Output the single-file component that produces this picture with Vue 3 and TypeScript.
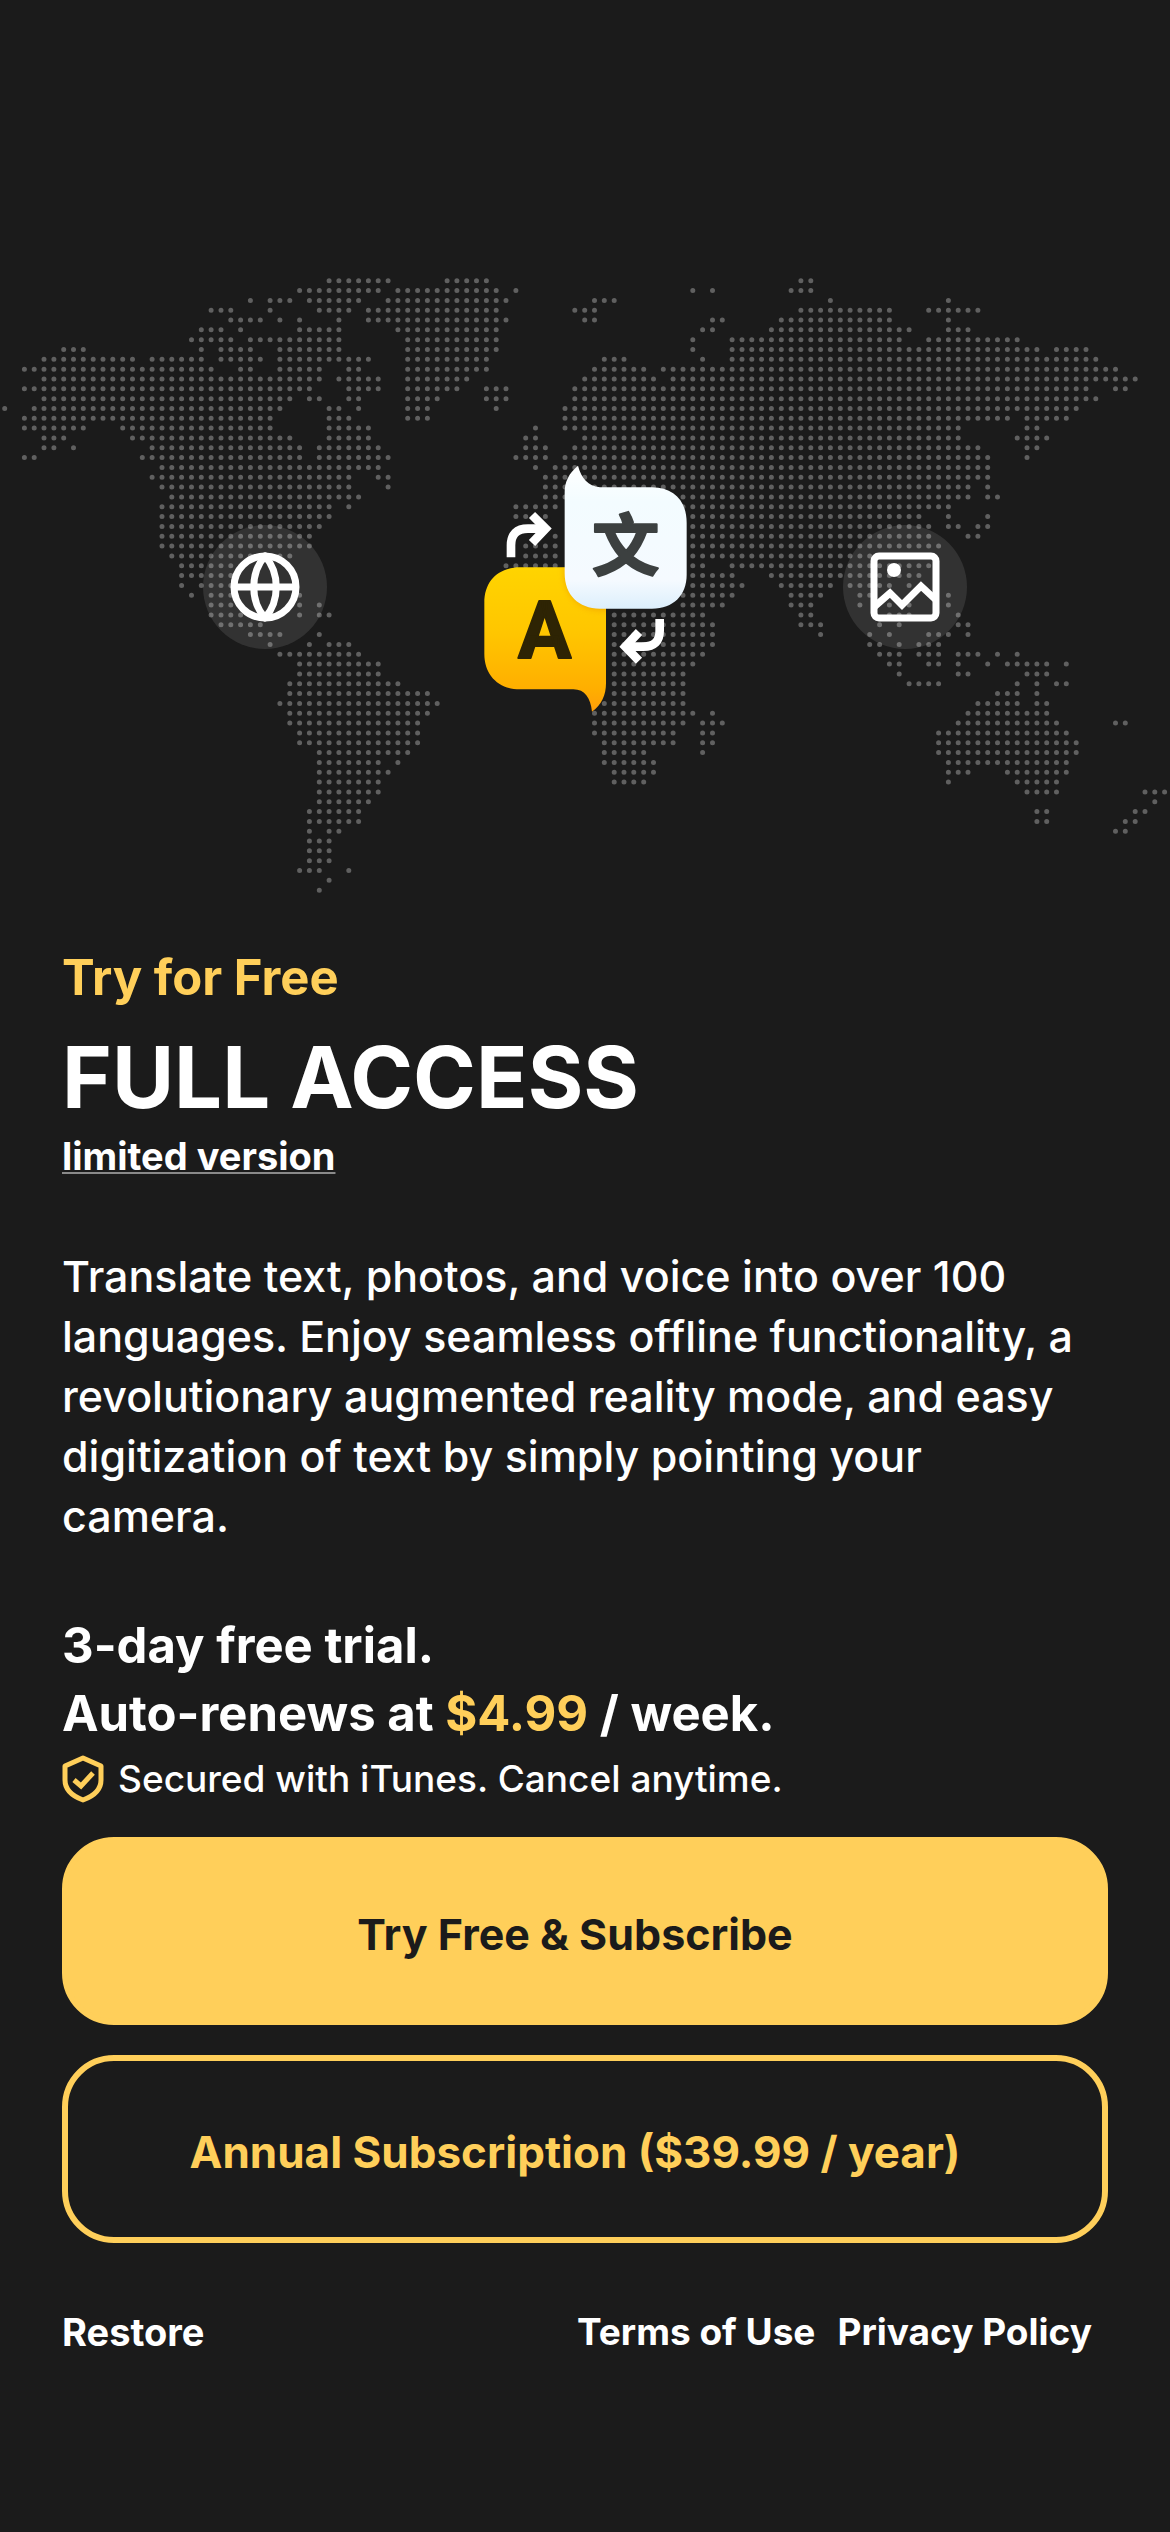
<script setup lang="ts">
// Land cells of the dotted world map: one entry per grid row, each a list of column spans.
const landRows: string[] = [
  '33-39 45-49 81-82',
  '30-38 40-50 52 70 72 80-82',
  '25 27-29 31-36 39-51 60-62 84 96',
  '21-23 27 32-35 37-50 58-60 81-90 94-99',
  '23-26 28 30 34 37-51 59-60 72-73 79-90 96',
  '20-22 24 30-34 40-50 71-72 78-92 96-98',
  '19-23 25-34 41-50 70 74-91 94-103',
  '6-8 20 22-25 28-34 41-50 70 74-105 107-110',
  '4-13 15-20 22-26 28-37 41-49 61-63 71 74-111',
  '2-21 24-25 28-32 35-36 41-49 60-65 67-113',
  '4-32 34-38 41-47 59-66 68-115',
  '2-31 35-38 41-46 49-51 58-110 113-114',
  '4-29 31-32 35-36 41-44 49-51 58-111',
  '0 3-28 33-34 36 41-43 50 57-109',
  '2-27 33-35 41-43 57-102 104-108',
  '2-8 12-27 33-37 54 57-97 104-105',
  '4-6 13-29 33-37 53-54 59-97 103-106',
  '4-5 7 15-30 32-38 53-55 58-99 104-105',
  '2-3 14-30 32-39 52-55 57-100 104',
  '16-38 54 56-100',
  '15-35 38-39 55-100',
  '16-35 39 55-98 100',
  '17-36 55-98 100-101',
  '16-33 35 52-56 60-96',
  '16-33 52-55 60-93 96 100',
  '16-32 60-94 96-97 99-100',
  '16-31 56 60-94 98-99',
  '16-31 53-56 60-95',
  '17-29 53-56 60-94',
  '18-24 51-56 60-71 74-94',
  '18-23 70-74 78-93',
  '18 20-23 70-75 79-84 86-90 92',
  '19 21-23 30 69-74 80-83 87-88 96',
  '21-23 30 32 69-73 80-82 87 90 92 96',
  '21-24 30 32-33 62-71 81-82 90-92 97',
  '22-26 62-72 81-83 89 91 97-98',
  '25-28 32 62-72 83 88 90 94-96 98',
  '27 31 33-35 62-72 88-89 91 93-95',
  '28-36 62-71 89-91 93-95 97-99 101 103',
  '30-38 62-70 90-91 94-95 97 100 102-106 108',
  '30-38 62-69 91 97-98 104-106',
  '29-40 62-69 92-95 103 105 107-108',
  '29-43 62-69 101-103 105',
  '28-44 61-69 99-103 105-106',
  '29-43 60-70 72 98-106',
  '29-42 60-69 71-73 97-107 113-114',
  '30-42 60-68 71-72 95-108',
  '30-42 61-68 71-72 95-109',
  '32-41 61-65 71 95-109',
  '32-38 40 61-66 96-108',
  '32-39 62-66 96-98 102-108',
  '32-38 62-65 96 103-107',
  '32-38 104-107 116-118',
  '32-37 117',
  '31-36 105-106 115-116',
  '31-36 105-106 114-115',
  '31 33-34 113-114',
  '31-33',
  '31-33',
  '31-33',
  '30-32 35',
  '33',
  '32',
]

const pitch = 9.83
const originX = 4.7
const originY = 10.7

// Zero-length segments with round caps give one dot per cell.
const mapPath: string = landRows
  .map((row, r) => {
    const y = (originY + r * pitch).toFixed(1)
    return row
      .split(' ')
      .map((span) => {
        const [from, to = from] = span.split('-').map(Number)
        let d = ''
        for (let c = from; c <= to; c++) d += `M${(originX + c * pitch).toFixed(1)} ${y}h0`
        return d
      })
      .join('')
  })
  .join('')
</script>

<template>
  <main class="paywall">
    <section class="hero" aria-hidden="true">
      <svg class="map" viewBox="0 0 1170 630">
        <path :d="mapPath" fill="none" stroke="#606060" stroke-width="5" stroke-linecap="round" />
      </svg>
      <div class="features">
        <span class="badge">
          <svg viewBox="0 0 70 70" fill="none" stroke="#fff" stroke-width="7">
            <circle cx="35" cy="35" r="31" />
            <path d="M4 35H66" />
            <path d="M35 4C20 21 20 49 35 66C50 49 50 21 35 4Z" stroke-linejoin="round" />
          </svg>
        </span>
        <svg class="logo" viewBox="0 0 750 810">
          <defs>
            <linearGradient id="gold" x1="0" y1="0" x2="0" y2="1">
              <stop offset="0" stop-color="#ffd400" />
              <stop offset="0.45" stop-color="#ffc600" />
              <stop offset="0.85" stop-color="#ffae00" />
              <stop offset="1" stop-color="#ff9d0a" />
            </linearGradient>
            <linearGradient id="ice" x1="0" y1="0" x2="0" y2="1">
              <stop offset="0" stop-color="#ffffff" />
              <stop offset="0.25" stop-color="#f3fcff" />
              <stop offset="0.8" stop-color="#f5faff" />
              <stop offset="1" stop-color="#dceffc" />
            </linearGradient>
            <filter id="soft" x="-20%" y="-20%" width="140%" height="140%">
              <feGaussianBlur stdDeviation="9" />
            </filter>
            <clipPath id="goldClip">
              <path d="M180 352H438V700C438 735 425 765 396 785C392 745 375 718 340 718H180C115 718 73 675 73 612V458C73 392 115 352 180 352Z" />
            </clipPath>
          </defs>
          <path
            d="M180 352H438V700C438 735 425 765 396 785C392 745 375 718 340 718H180C115 718 73 675 73 612V458C73 392 115 352 180 352Z"
            fill="url(#gold)"
          />
          <g clip-path="url(#goldClip)">
            <rect x="314" y="112" width="366" height="368" rx="106" fill="#e88a00" opacity="0.55" filter="url(#soft)" />
          </g>
          <path
            d="M354 47C326 70 314 96 314 128V370C314 435 355 476 420 476H576C640 476 680 435 680 374V218C680 152 640 112 576 112H420C384 108 364 85 354 47Z"
            fill="url(#ice)"
          />
          <text class="latin" x="254" y="624" text-anchor="middle">A</text>
          <text class="han" x="497" y="359" text-anchor="middle">文</text>
          <g fill="none" stroke="#fff" stroke-width="26">
            <path d="M153 322V286Q153 236 204 236H250" />
            <path d="M216 195L257 236L216 279" />
            <path d="M599 507V542Q599 590 550 590H505" />
            <path d="M537 546L496 590L537 632" />
          </g>
        </svg>
        <span class="badge">
          <svg viewBox="0 0 70 70" fill="none" stroke="#fff" stroke-width="7">
            <rect x="4" y="4" width="62" height="62" rx="5" />
            <path d="M4 55L20 41L32 53L51 34L66 48" />
            <circle cx="24" cy="18" r="7" fill="#fff" stroke="none" />
          </svg>
        </span>
      </div>
    </section>

    <section class="offer">
      <p class="eyebrow">Try for Free</p>
      <h1>FULL ACCESS</h1>
      <a class="limited" href="#limited">limited version</a>
      <p class="pitch">
        Translate text, photos, and voice into over 100 languages. Enjoy seamless offline
        functionality, a revolutionary augmented reality mode, and easy digitization of text by
        simply pointing your camera.
      </p>
      <p class="terms">3-day free trial.<br />Auto-renews at <em>$4.99</em> / week.</p>
      <p class="secured">
        <svg viewBox="0 0 42 48" fill="none" stroke="#ffcf5a" aria-hidden="true">
          <path d="M21 3L39 11V25C39 34 32 41 21 45C10 41 3 34 3 25V11Z" stroke-width="5" stroke-linejoin="round" />
          <path d="M12 25L19 31L31 18" stroke-width="5" />
        </svg>
        Secured with iTunes. Cancel anytime.
      </p>
      <div class="actions">
        <button type="button" class="primary">Try Free &amp; Subscribe</button>
        <button type="button" class="outline">Annual Subscription ($39.99 / year)</button>
      </div>
    </section>

    <footer class="links">
      <a class="restore" href="#restore">Restore</a>
      <nav>
        <a href="#terms">Terms of Use</a>
        <a href="#privacy">Privacy Policy</a>
      </nav>
    </footer>
  </main>
</template>

<style>
body {
  background: #1b1b1b;
}
</style>

<style scoped>
.paywall {
  box-sizing: border-box;
  min-height: 100vh;
  padding-top: 270px;
  background: #1b1b1b;
  color: #fff;
  font-family: Inter, "Liberation Sans", sans-serif;
}

.hero {
  display: grid;
  align-items: center;
}

.map,
.features {
  grid-area: 1 / 1;
}

.map {
  display: block;
  width: 100%;
}

.features {
  display: flex;
  justify-content: center;
  align-items: center;
  gap: 133px;
}

.badge {
  display: grid;
  place-items: center;
  width: 124px;
  height: 124px;
  margin-top: 4px;
  border-radius: 50%;
  background: rgba(255, 255, 255, 0.1);
}

.badge svg {
  width: 70px;
  height: 70px;
}

.logo {
  width: 250px;
  height: 270px;
}

.latin {
  font: 700 238px Roboto, sans-serif;
  fill: #2e2404;
  stroke: #2e2404;
  stroke-width: 6px;
  stroke-linejoin: round;
}

.han {
  font: 700 202px "Noto Sans CJK SC", sans-serif;
  fill: #3c4040;
  stroke: #3c4040;
  stroke-width: 6px;
  stroke-linejoin: round;
}

.offer {
  display: flex;
  flex-direction: column;
  align-items: flex-start;
  padding: 48px 62px 0;
}

.offer p,
.offer h1 {
  margin: 0;
}

.offer .eyebrow {
  color: #ffcf5a;
  font-size: 49px;
  line-height: 60px;
  font-weight: 700;
}

.offer h1 {
  margin-top: 20px;
  font-size: 85px;
  line-height: 100px;
  font-weight: 700;
}

.limited {
  margin-top: 4px;
  color: #fff;
  font-size: 38px;
  line-height: 48px;
  font-weight: 700;
  text-decoration: underline #8a8a8a 2px;
  text-underline-offset: 2px;
  text-decoration-skip-ink: none;
}

.offer .pitch {
  margin-top: 66px;
  padding-right: 24px;
  font-size: 43px;
  line-height: 60px;
  font-weight: 500;
}

.offer .terms {
  margin-top: 66px;
  font-size: 49px;
  line-height: 68px;
  font-weight: 700;
}

.terms em {
  color: #ffcf5a;
  font-style: normal;
}

.offer .secured {
  display: flex;
  align-items: center;
  gap: 14px;
  margin-top: 7px;
  font-size: 37px;
  line-height: 48px;
  font-weight: 500;
}

.secured svg {
  width: 42px;
  height: 48px;
}

.actions {
  display: flex;
  flex-direction: column;
  gap: 30px;
  width: 100%;
  margin-top: 34px;
}

.actions button {
  box-sizing: border-box;
  width: 100%;
  height: 188px;
  padding: 6px 20px 0 0;
  border: 6px solid #ffcf5a;
  border-radius: 52px;
  font: inherit;
  font-size: 43px;
  font-weight: 700;
}

.actions .primary {
  background: #ffcf5a;
  color: #1b1b1b;
}

.actions .outline {
  background: transparent;
  color: #ffcf5a;
  font-size: 44px;
}

.links {
  display: flex;
  justify-content: space-between;
  padding: 65px 78px 0 62px;
  font-size: 37px;
  line-height: 48px;
  font-weight: 700;
}

.links nav {
  display: flex;
  gap: 22px;
}

.links a {
  color: #fff;
  text-decoration: none;
}

.links .restore {
  font-size: 38px;
}
</style>
